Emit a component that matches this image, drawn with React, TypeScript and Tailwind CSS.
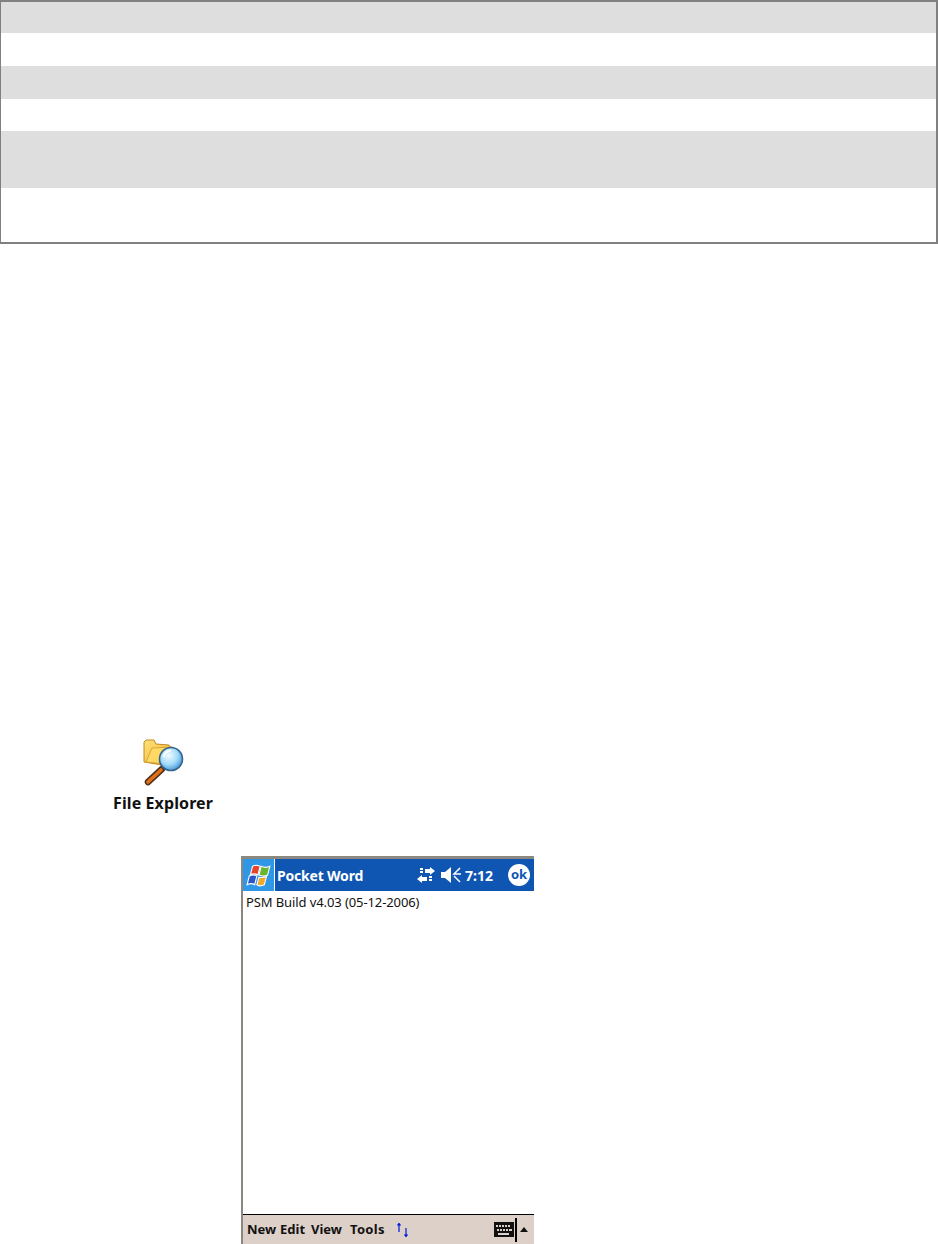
const rows = ['h-[31px] bg-[#dedede]', 'h-[33px] bg-white', 'h-[33px] bg-[#dedede]', 'h-[32px] bg-white', 'h-[57px] bg-[#dedede]', 'h-[54px] bg-white'];

function ExplorerIcon() {
  return (
    <svg width="42" height="50" viewBox="0 0 42 50">
      <defs>
        <linearGradient id="folder" x1="0" y1="0" x2="1" y2="1">
          <stop offset="0" stopColor="#ffe27a" />
          <stop offset="1" stopColor="#eeae2c" />
        </linearGradient>
        <radialGradient id="lens" cx="0.4" cy="0.35" r="0.7">
          <stop offset="0" stopColor="#f2fbff" />
          <stop offset="0.55" stopColor="#a3dcf8" />
          <stop offset="1" stopColor="#3f8fd6" />
        </radialGradient>
      </defs>
      <path d="M2 3 L2 23 L20 26 L30 10 L27 6 L14 5 L12 1 L4 1 Z" fill="url(#folder)" stroke="#c08a24" strokeWidth="1" />
      <path d="M4 23 L10 9 L31 8 L25 25 Z" fill="#ffd964" stroke="#d39a2c" strokeWidth="0.8" />
      <path d="M20 30 L6 43" stroke="#4e2f1a" strokeWidth="6.5" strokeLinecap="round" />
      <path d="M19 31 L6 43" stroke="#e0701a" strokeWidth="3.6" strokeLinecap="round" />
      <circle cx="29" cy="20" r="11.5" fill="url(#lens)" stroke="#35648c" strokeWidth="1.6" />
      <path d="M21.5 18 A8.5 8.5 0 0 1 29 11.5" fill="none" stroke="#ffffff" strokeWidth="2" />
    </svg>
  );
}

function WinFlag() {
  return (
    <svg width="26" height="26" viewBox="0 0 24 24">
      <path d="M6 4 Q9 2 13 4 L11 12 Q7 10 4 12 Z" fill="#e8442a" stroke="#fff" strokeWidth="1" />
      <path d="M14 4 Q18 6 22 4 L20 12 Q16 14 12 12 Z" fill="#69b52e" stroke="#fff" strokeWidth="1" />
      <path d="M3 13 Q7 11 10 13 L8 21 Q5 19 1 21 Z" fill="#2a55c8" stroke="#fff" strokeWidth="1" />
      <path d="M12 14 Q16 15 19 13 L17 21 Q13 23 10 21 Z" fill="#f0a92a" stroke="#fff" strokeWidth="1" />
    </svg>
  );
}

function SyncIcon() {
  return (
    <svg width="18" height="16" viewBox="0 0 18 16" fill="#fff">
      <path d="M8 2h5V0l5 4-5 4V6H8z" />
      <path d="M10 10H5V8l-5 4 5 4v-2h5z" />
      <path d="M3 1h3v2H3zM3 4h3v2H3zM12 9h3v2h-3zM12 12h3v2h-3z" />
    </svg>
  );
}

function SpeakerIcon() {
  return (
    <svg width="21" height="16" viewBox="0 0 21 16">
      <path d="M0 5h4l6-5v16l-6-5H0z" fill="#fff" />
      <path d="M19 1 L13 7 H20 M13 9 L19 15" fill="none" stroke="#fff" strokeWidth="1.5" />
    </svg>
  );
}

function KeyboardIcon() {
  return (
    <svg width="20" height="15" viewBox="0 0 20 15">
      <rect width="20" height="15" fill="#111" />
      <path d="M2 3h2v2H2zM5 3h2v2H5zM8 3h2v2H8zM11 3h2v2h-2zM14 3h2v2h-2zM3 7h2v2H3zM6 7h2v2H6zM9 7h2v2H9zM12 7h2v2h-2zM15 7h3v2h-3zM4 11h11v2H4z" fill="#ddd0c8" />
    </svg>
  );
}

export default function App() {
  return (
    <div className="w-[938px] h-[1244px] overflow-hidden bg-white font-['Liberation_Sans',sans-serif]">
      <div className="border-t-2 border-b-2 border-l border-r-2 border-[#808080]">
        {rows.map((row, index) => (
          <div key={index} className={row} />
        ))}
      </div>

      <div className="ml-[112px] mt-[495px] w-[102px] flex flex-col items-center">
        <ExplorerIcon />
        <div className="mt-[5px] text-[16px] leading-[18px] font-bold tracking-[0.1px] whitespace-nowrap text-[#111] font-['Noto_Sans',sans-serif]">File Explorer</div>
      </div>

      <div className="ml-[241px] mt-[44px] w-[293px] h-[388px] flex flex-col border-t-[3px] border-l-[2px] border-[#8a8880]">
        <div className="h-[32px] flex items-center bg-[#0f55b2] text-white font-['Noto_Sans',sans-serif]">
          <div className="w-[31px] h-full flex items-center justify-center bg-[#2f97e6] border-r border-white box-content">
            <WinFlag />
          </div>
          <div className="ml-[2px] w-[88px] text-[14px] tracking-[-0.2px] font-bold whitespace-nowrap">Pocket Word</div>
          <div className="ml-[52px]"><SyncIcon /></div>
          <div className="ml-[6px]"><SpeakerIcon /></div>
          <div className="ml-[3px] w-[29px] text-[14px] font-bold">7:12</div>
          <div className="ml-[14px] w-[22px] h-[22px] rounded-full bg-white text-[#0f55b2] text-[13px] leading-[21px] font-bold text-center">ok</div>
        </div>
        <div className="flex-1 bg-white px-[3px] pt-[2px] text-[13px] tracking-[-0.1px] leading-[18px] text-[#111] font-['Noto_Sans',sans-serif]">
          PSM Build v4.03 (05-12-2006)
        </div>
        <div className="h-[30px] flex items-center border-t border-black bg-[#ddd0c8] pl-[4px] text-[13px] font-bold text-[#111] font-['Noto_Sans',sans-serif]">
          <span className="w-[27px]">New</span>
          <span className="ml-[6px] w-[25px]">Edit</span>
          <span className="ml-[6px] w-[31px]">View</span>
          <span className="ml-[8px] w-[35px] tracking-[0.3px]">Tools</span>
          <svg className="ml-[11px]" width="14" height="16" viewBox="0 0 14 16" fill="none" stroke="#0018e0" strokeWidth="1.2">
            <path d="M3 10V1M1 3h4M2 2h2M10 6v9M8 13h4M9 14h2" />
          </svg>
          <div className="ml-auto flex items-center h-full">
            <KeyboardIcon />
            <div className="ml-[1px] w-[2px] h-[24px] bg-black" />
            <svg className="ml-[3px] mr-[6px]" width="8" height="5" viewBox="0 0 8 5">
              <path d="M4 0L8 5H0z" fill="#111" />
            </svg>
          </div>
        </div>
      </div>
    </div>
  );
}
